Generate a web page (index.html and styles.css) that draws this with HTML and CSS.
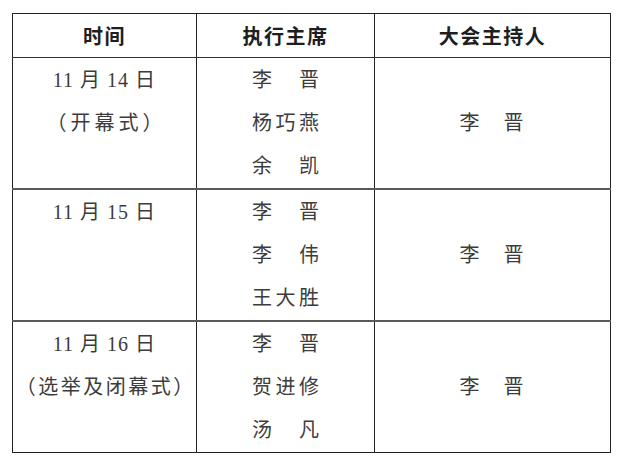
FILE: index.html
```html
<!DOCTYPE html>
<html lang="zh-CN">
<head>
<meta charset="utf-8">
<link rel="stylesheet" href="styles.css">
</head>
<body>
<table class="sched">
  <colgroup>
    <col class="c1"><col class="c2"><col class="c3">
  </colgroup>
  <thead>
    <tr class="head">
      <th>时间</th><th>执行主席</th><th>大会主持人</th>
    </tr>
  </thead>
  <tbody>
    <tr class="r1">
      <td class="date"><div class="ln d">11 月 14 日</div><div class="ln p p-short">（开幕式）</div></td>
      <td class="names"><div class="ln n">李　晋</div><div class="ln n">杨巧燕</div><div class="ln n">余　凯</div></td>
      <td class="host"><div class="ln n">李　晋</div></td>
    </tr>
    <tr class="r2">
      <td class="date"><div class="ln d">11 月 15 日</div></td>
      <td class="names"><div class="ln n">李　晋</div><div class="ln n">李　伟</div><div class="ln n">王大胜</div></td>
      <td class="host"><div class="ln n">李　晋</div></td>
    </tr>
    <tr class="r3">
      <td class="date"><div class="ln d">11 月 16 日</div><div class="ln p p-long">（选举及闭幕式）</div></td>
      <td class="names"><div class="ln n">李　晋</div><div class="ln n">贺进修</div><div class="ln n">汤　凡</div></td>
      <td class="host"><div class="ln n">李　晋</div></td>
    </tr>
  </tbody>
</table>
</body>
</html>
```
FILE: styles.css
```css
html, body {
  margin: 0;
  padding: 0;
  background: #ffffff;
}
body {
  padding: 13px 0 0 12px;
}
.sched {
  border-collapse: collapse;
  table-layout: fixed;
  width: 598px;
  border: 1.5px solid #222;
}
.c1 { width: 184px; }
.c2 { width: 178px; }
.c3 { width: 236px; }
.sched th, .sched td {
  border-left: 1.5px solid #222;
  border-right: 1.5px solid #222;
  padding: 0;
  text-align: center;
}
.head th {
  height: 43px;
  font-family: "Noto Sans CJK SC", sans-serif;
  font-weight: 700;
  font-size: 20px;
  letter-spacing: 1.5px;
  color: #1e1e1e;
  border-bottom: 1.5px solid #333;
  vertical-align: middle;
}
.sched tbody tr {
  border-bottom: 2px solid #5a5a5a;
}
.sched tbody tr.r3 {
  border-bottom: 1.5px solid #222;
}
.r1 { height: 131px; }
.r2 { height: 131px; }
.r3 { height: 131px; }
.sched td {
  font-family: "Liberation Serif", "Noto Sans CJK SC", serif;
  font-size: 20px;
  color: #3c3c3c;
  vertical-align: top;
  padding-top: 1px;
}
.sched td.host {
  vertical-align: middle;
  padding-top: 0;
}
.ln {
  line-height: 43px;
  height: 43px;
  white-space: nowrap;
}
.d {
  letter-spacing: 1px;
}
.p-short {
  letter-spacing: 4px;
  padding-left: 4px;
}
.p-long {
  letter-spacing: 2.5px;
  padding-left: 2.5px;
}
.n {
  letter-spacing: 3.5px;
  padding-left: 3.5px;
}
.host .n {
  letter-spacing: 2px;
  padding-left: 0;
}
```
